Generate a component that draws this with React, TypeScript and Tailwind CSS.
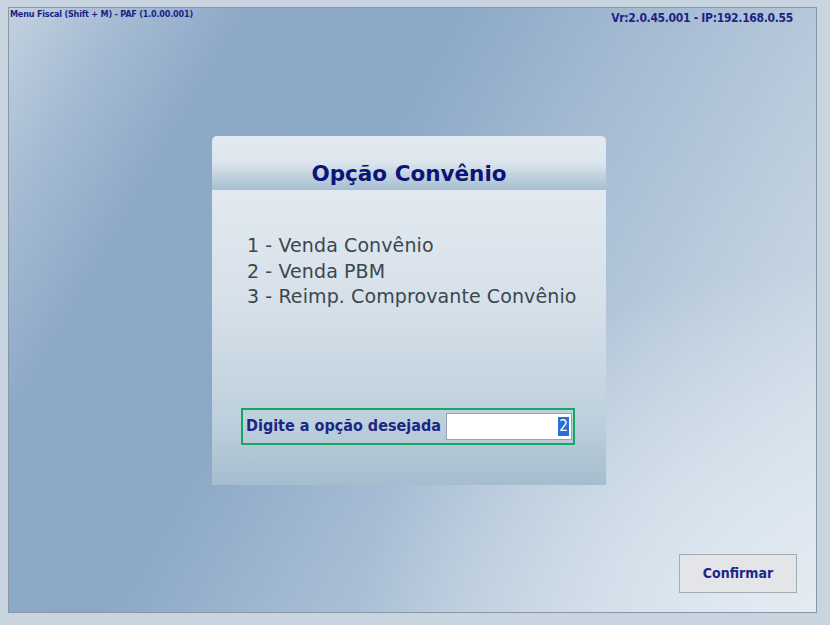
import React from "react";

const options = [
  "1 - Venda Convênio",
  "2 - Venda PBM",
  "3 - Reimp. Comprovante Convênio",
];

export default function App() {
  return (
    <div className="w-[830px] h-[625px] bg-[#c8d4e0] pt-[7px] pl-[8px] overflow-hidden">
      <div className="relative w-[809px] h-[606px] border border-[#8a96a3] flex flex-col bg-[radial-gradient(ellipse_at_100%_100%,rgba(228,236,243,0.9)_0%,rgba(228,236,243,0)_40%),linear-gradient(120deg,#c2d1df_0%,#a5bbd3_10%,#8faac8_20%,#8ba8c7_38%,#a3bad2_55%,#bccddd_75%,#dae4ed_100%)]">
        {/* top status line */}
        <div className="flex items-start justify-between h-[128px]">
          <span className="pl-[1px] pt-[1px] text-[9px] leading-[10px] font-bold text-[#1c2388] tracking-[-0.2px] [font-family:'DejaVu_Sans_Condensed','DejaVu_Sans',sans-serif]">
            Menu Fiscal (Shift + M) - PAF (1.0.00.001)
          </span>
          <span className="pr-[23px] pt-[2px] text-[12px] leading-[16px] font-bold text-[#1c2388] tracking-[-0.3px] [font-family:'DejaVu_Sans_Condensed','DejaVu_Sans',sans-serif]">
            Vr:2.0.45.001 - IP:192.168.0.55
          </span>
        </div>

        {/* dialog */}
        <div className="ml-[203px] w-[394px] h-[349px] rounded-t-[5px] flex flex-col overflow-hidden">
          <div className="h-[54px] flex items-end justify-center pb-[1px] bg-[linear-gradient(to_bottom,#e4ebf2_0%,#dce5ed_50%,#c3d4e0_72%,#a6bed0_100%)]">
            <h1 className="text-[21.5px] leading-[30px] font-bold text-[#0d1477] [font-family:'DejaVu_Sans',Verdana,sans-serif]">
              Opção Convênio
            </h1>
          </div>
          <div className="flex-1 flex flex-col bg-[linear-gradient(to_bottom,#e2e9f0_0%,#d6e0e9_40%,#bccfdc_80%,#a5bdce_100%)]">
            <ul className="pl-[35px] pt-[43px] text-[19px] leading-[25.5px] tracking-[0.1px] text-[#39474f] [font-family:'DejaVu_Sans',Verdana,sans-serif]">
              {options.map((o) => (
                <li key={o}>{o}</li>
              ))}
            </ul>
            <div className="ml-[29px] mt-[98px] w-[334px] h-[37px] border-2 border-[#17a663] flex items-center pl-[3px] gap-[5px]">
              <span className="text-[16px] font-bold text-[#1e2684] tracking-[0px] [font-family:'DejaVu_Sans_Condensed','DejaVu_Sans',sans-serif]">
                Digite a opção desejada
              </span>
              <div className="w-[126px] h-[27px] bg-white border border-[#9aa3ad] flex items-center justify-end pr-[2px]">
                <span className="bg-[#2b6fd1] text-white text-[15px] leading-[19px] px-[1px] [font-family:'DejaVu_Sans_Condensed','DejaVu_Sans',sans-serif]">
                  2
                </span>
              </div>
            </div>
          </div>
        </div>

        <div className="flex-1" />
        <div className="flex justify-end pr-[19px] pb-[19px]">
          <button
            type="button"
            className="w-[118px] h-[39px] bg-[#e3e5e9] border border-[#a3abb4] text-[14px] font-bold text-[#1e2684] [font-family:'DejaVu_Sans_Condensed','DejaVu_Sans',sans-serif]"
          >
            Confirmar
          </button>
        </div>
      </div>
    </div>
  );
}
